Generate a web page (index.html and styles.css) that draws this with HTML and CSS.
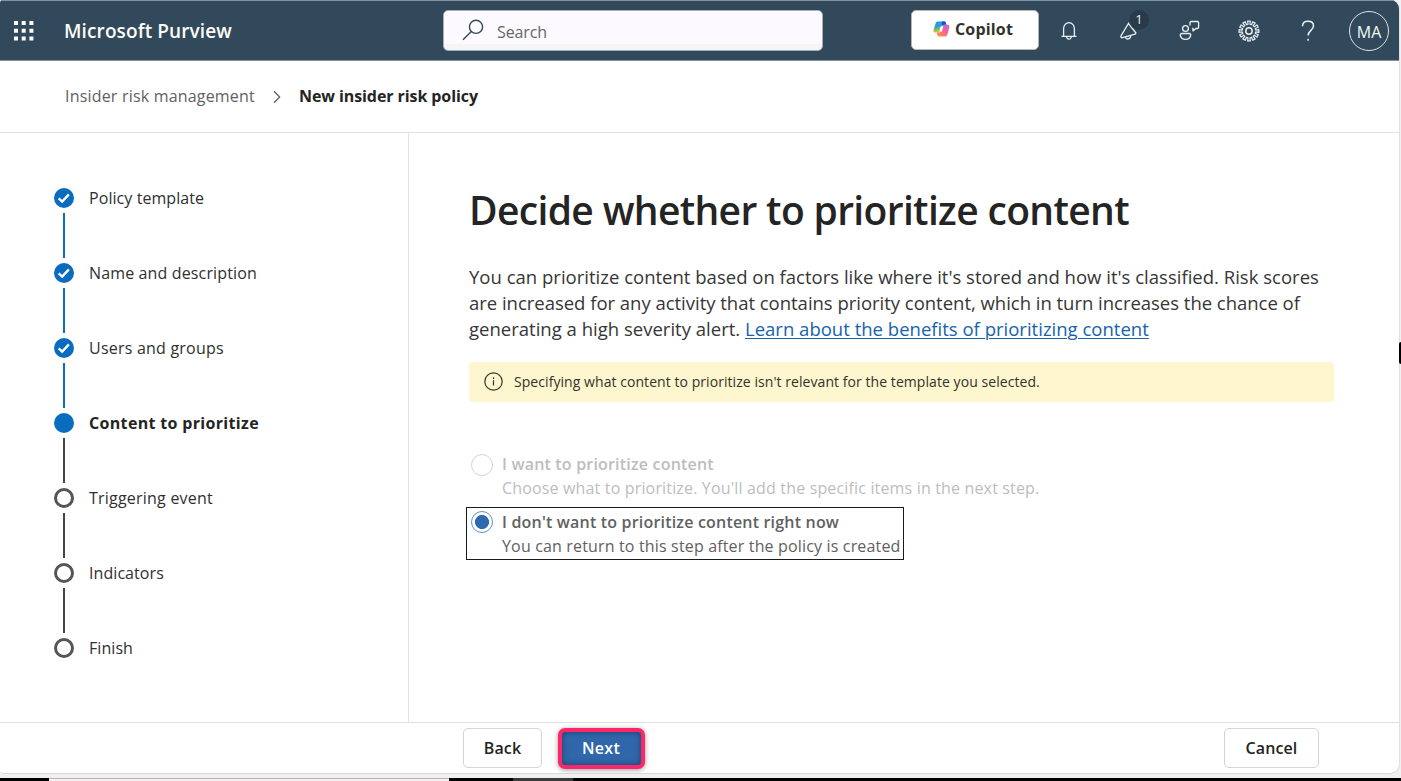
FILE: index.html
```html
<!DOCTYPE html>
<html lang="en">
<head>
<meta charset="utf-8">
<title>Microsoft Purview</title>
<link rel="stylesheet" href="styles.css">
</head>
<body>
<div class="window">
  <header class="topbar">
    <div class="brand">
      <svg class="waffle" width="20" height="20" viewBox="0 0 20 20" fill="#fdfdf5">
        <path d="M0 0h4v4H0zM7.700 0h4v4h-4zM15.400 0h4v4h-4zM0 7.700h4v4H0zM7.700 7.700h4v4h-4zM15.400 7.700h4v4h-4zM0 15.400h4v4H0zM7.700 15.400h4v4h-4zM15.400 15.400h4v4h-4z"/>
      </svg>
      <span class="brand-name">Microsoft Purview</span>
    </div>
    <div class="search">
      <svg width="22" height="22" viewBox="0 0 22 22" fill="none" stroke="#33495c" stroke-width="1.4"><circle cx="14" cy="7.8" r="6.6"/><path d="M9.3 12.5L1 20.8"/></svg>
      <span>Search</span>
    </div>
    <div class="actions">
      <button class="copilot">
        <svg width="17" height="16" viewBox="0 0 17 16">
          <defs>
            <linearGradient id="cpa" x1="0" y1="0" x2="0.3" y2="1"><stop offset="0" stop-color="#17a4e8"/><stop offset=".5" stop-color="#2d9bd8"/><stop offset=".72" stop-color="#7fc35b"/><stop offset="1" stop-color="#f3c21c"/></linearGradient>
            <linearGradient id="cpb" x1="1" y1="0" x2="0.3" y2="1"><stop offset="0" stop-color="#b56bea"/><stop offset=".5" stop-color="#f0609c"/><stop offset="1" stop-color="#ff8a4c"/></linearGradient>
          </defs>
          <path d="M5 .5h6.200c.9 0 1.300.5 1.600 1.300l.6 1.900h-2c-1 0-1.600.6-1.900 1.500L7.800 10c-.3 1-.8 1.600-1.900 1.600H2.400C.8 11.600.2 10.300.6 8.700L2.500 2.700C2.900 1.300 3.700.5 5 .5z" fill="url(#cpa)"/>
          <path d="M8.500.5h2.700c.9 0 1.300.5 1.600 1.300l.6 1.900h-2c-1 0-1.600.6-1.900 1.500z" fill="#1b50c8"/>
          <path d="M12 15.500H6.200c-1 0-1.500-.6-1.800-1.500l-.7-2.400h2.200c1.100 0 1.600-.6 1.900-1.600l1.700-4.800c.3-.9.9-1.500 1.900-1.500h3.200c1.600 0 2.100 1.300 1.700 2.900l-1.800 6.300c-.4 1.600-1 2.600-2.300 2.600z" fill="url(#cpb)"/>
          <path d="M7.700 5.200h2.700L9 10.600H6.300z" fill="#fff"/>
        </svg>
        <span>Copilot</span>
      </button>
      <svg class="bell" width="18" height="20" viewBox="0 0 18 20" fill="none" stroke="#e7eff0" stroke-width="1.300" stroke-linejoin="round"><path d="M3.600 15V7.500a5.400 5.900 0 0 1 10.800 0V15M1.500 15.300h15M6.700 15.600a2.300 2.500 0 0 0 4.600 0"/></svg>
      <div class="whatsnew">
        <svg width="20" height="22" viewBox="0 0 20 22" fill="none" stroke="#e7eff0" stroke-width="1.300" stroke-linejoin="round"><path d="M10 2.500L2 15.800c-.6 1 .3 2.200 1.500 1.900L17 13.800M9.500 3.500l7.800 10M6.500 17.200c.5 2.600 4.800 2.600 5.300-1.600"/></svg>
        <span class="badge">1</span>
      </div>
      <svg class="feedback" width="21" height="21" viewBox="0 0 21 21" fill="none" stroke="#e7eff0" stroke-width="1.350" stroke-linejoin="round"><circle cx="6.500" cy="8.500" r="2.900"/><path d="M2.800 13.500h7.400c1 0 1.600.7 1.500 1.600-.3 2.500-2.200 4.200-5.200 4.200s-4.900-1.700-5.200-4.200c-.1-.9.500-1.600 1.500-1.600zM11 5.500V2.800c0-.8.5-1.300 1.300-1.300h6c.8 0 1.300.5 1.300 1.300v4.400c0 .8-.5 1.300-1.300 1.300h-1.400l-2.900 2.400V8.500h-.8"/></svg>
      <svg class="gear" width="22" height="22" viewBox="0 0 22 22" fill="none" stroke="#e7eff0" stroke-width="1.200" stroke-linejoin="round"><circle cx="11" cy="11" r="3.200" stroke-width="1.500"/><path d="M10.060 4.270L9.610 1.100L12.390 1.100L11.940 4.270L13.540 4.700L14.740 1.730L17.150 3.120L15.180 5.640L16.360 6.820L18.880 4.850L20.270 7.260L17.300 8.460L17.730 10.060L20.900 9.610L20.900 12.390L17.730 11.940L17.300 13.540L20.270 14.740L18.880 17.150L16.360 15.180L15.180 16.360L17.150 18.880L14.740 20.270L13.540 17.300L11.940 17.730L12.390 20.900L9.610 20.900L10.060 17.730L8.460 17.300L7.260 20.270L4.850 18.880L6.820 16.360L5.640 15.180L3.120 17.150L1.730 14.740L4.700 13.540L4.270 11.940L1.100 12.390L1.100 9.610L4.270 10.060L4.700 8.460L1.730 7.260L3.120 4.850L5.640 6.820L6.820 5.640L4.850 3.120L7.260 1.730L8.460 4.700z"/></svg>
      <svg class="help" width="14" height="22" viewBox="0 0 14 22" fill="none" stroke="#e7eff0" stroke-width="1.500"><path d="M1.500 6.300C1.500 3 3.700 1.200 7 1.200s5.500 1.900 5.500 4.700c0 4.400-5.400 4.600-5.400 9.600"/><path d="M7.100 18.800v2"/></svg>
      <div class="avatar">MA</div>
    </div>
  </header>
  <nav class="crumbs">
    <span class="crumb">Insider risk management</span>
    <svg width="8" height="14" viewBox="0 0 8 14" fill="none" stroke="#616161" stroke-width="1.300"><path d="M1 1.200L6.700 7 1 12.800"/></svg>
    <span class="crumb-current">New insider risk policy</span>
  </nav>
  <div class="body">
    <aside class="steps">
      <div class="step done"><span class="dot"><svg width="20" height="20" viewBox="0 0 20 20" fill="none" stroke="#fff" stroke-width="2.300"><path d="M4.700 10.300l3.500 3.300 6.700-7.200"/></svg></span><span class="label t1">Policy template</span></div>
      <div class="step done"><span class="dot"><svg width="20" height="20" viewBox="0 0 20 20" fill="none" stroke="#fff" stroke-width="2.300"><path d="M4.700 10.300l3.500 3.300 6.700-7.200"/></svg></span><span class="label t2">Name and description</span></div>
      <div class="step done"><span class="dot"><svg width="20" height="20" viewBox="0 0 20 20" fill="none" stroke="#fff" stroke-width="2.300"><path d="M4.700 10.300l3.500 3.300 6.700-7.200"/></svg></span><span class="label t3">Users and groups</span></div>
      <div class="step current"><span class="dot"></span><span class="label">Content to prioritize</span></div>
      <div class="step todo"><span class="dot"></span><span class="label t3">Triggering event</span></div>
      <div class="step todo"><span class="dot"></span><span class="label t1">Indicators</span></div>
      <div class="step todo"><span class="dot"></span><span class="label t1">Finish</span></div>
    </aside>
    <main class="content">
      <h1>Decide whether to prioritize content</h1>
      <p class="intro">You can prioritize content based on factors like where it's stored and how it's classified. Risk scores<br><span class="tight">are increased for any activity that contains priority content, which in turn increases the chance of</span><br>generating a high severity alert. <a>Learn about the benefits of prioritizing content</a></p>
      <div class="notice">
        <svg width="19" height="19" viewBox="0 0 19 19" fill="none" stroke="#333329" stroke-width="1.200"><circle cx="9.500" cy="9.500" r="8.700"/><path d="M9.500 8.200v5.300M9.500 5.200v1.700"/></svg>
        <span>Specifying what content to prioritize isn't relevant for the template you selected.</span>
      </div>
      <div class="choice disabled">
        <span class="radio"></span>
        <div><div class="choice-title">I want to prioritize content</div><div class="choice-text">Choose what to prioritize. You'll add the specific items in the next step.</div></div>
      </div>
      <div class="choice selected">
        <span class="radio"></span>
        <div><div class="choice-title">I don't want to prioritize content right now</div><div class="choice-text">You can return to this step after the policy is created</div></div>
      </div>
    </main>
  </div>
  <footer class="footer">
    <button class="btn back">Back</button>
    <button class="btn next">Next</button>
    <button class="btn cancel">Cancel</button>
  </footer>
</div>
<div class="edge-mark"></div>
<div class="desktop"><i class="d1"></i><i class="d2"></i><i class="d3"></i><i class="d4"></i><i class="d5"></i></div>
</body>
</html>
```
FILE: styles.css
```css
* { box-sizing: border-box; }
body {
  margin: 0;
  width: 1401px;
  height: 781px;
  overflow: hidden;
  background: #f0f0f0;
  font-family: "Open Sans", "Noto Sans", sans-serif;
  font-size: 16px;
  color: #242424;
}
button { font-family: inherit; margin: 0; padding: 0; }
svg { display: block; flex: none; }

.window {
  display: flex;
  flex-direction: column;
  width: 1400px;
  height: 774px;
  background: #fff;
  border-right: 1px solid #e0e0e0;
  border-bottom: 1px solid #d8d8d8;
  border-radius: 3px 9px 10px 4px;
  overflow: hidden;
}

.topbar {
  display: flex;
  height: 61px;
  flex: none;
  background: #32495c;
  border-top: 1px solid #8593a0;
  border-bottom: 1px solid #8593a0;
}
.brand { display: flex; align-items: center; width: 443px; padding-left: 13.500px; gap: 30.500px; }
.brand-name { color: #fdfdf8; font-size: 19px; font-weight: 600; letter-spacing: .11px; padding-top: 1px; }
.search {
  display: flex;
  align-items: center;
  gap: 13px;
  width: 380px;
  height: 41px;
  margin-top: 9px;
  padding-left: 18px;
  background: linear-gradient(#fdfaff 33px, #f5f5f5 33px);
  border: 1px solid #a6afb8;
  border-radius: 5px;
  color: #666;
}
.search svg { margin-top: -1px; }
.search span { letter-spacing: -.1px; padding-top: 2px; }
.actions { display: flex; flex: 1; align-items: center; padding-left: 88px; }
.copilot {
  display: flex;
  align-items: center;
  gap: 5px;
  width: 128px;
  height: 40px;
  margin-top: -2px;
  padding: 0 0 1px 21px;
  background: #fff;
  border: 1px solid #b9b4ae;
  border-radius: 5px;
  color: #33302c;
  font-size: 16px;
  font-weight: 700;
  letter-spacing: .17px;
}
.bell { margin-left: 21px; }
.whatsnew { position: relative; margin-left: 41px; }
.badge {
  position: absolute;
  left: 10px;
  top: -10px;
  width: 20px;
  height: 20px;
  border-radius: 50%;
  background: #293a4b;
  color: #f2f2f2;
  font-size: 13px;
  line-height: 19px;
  text-align: center;
}
.feedback { margin-left: 40px; }
.gear { margin-left: 38px; }
.help { margin-left: 41px; }
.avatar {
  width: 40px;
  height: 40px;
  margin-left: 34px;
  border: 1.500px solid #dbe4e6;
  border-radius: 50%;
  color: #f4f8f4;
  font-size: 16px;
  line-height: 41px;
  text-align: center;
}

.crumbs {
  display: flex;
  align-items: center;
  flex: none;
  height: 72px;
  padding: 0 0 2px 65px;
  border-bottom: 1px solid #e3e3e3;
}
.crumbs svg { margin: 2px 18px 0 18px; }
.crumb { color: #616161; letter-spacing: .19px; }
.crumb-current { font-weight: 700; letter-spacing: -.08px; }

.body { display: flex; flex: 1; min-height: 0; }
.steps { width: 409px; flex: none; padding: 55px 0 0 54px; border-right: 1px solid #e3e3e3; }
.step { position: relative; display: flex; gap: 15px; height: 75px; }
.step:not(:last-child)::after {
  content: "";
  position: absolute;
  left: 8.700px;
  top: 25px;
  width: 2.600px;
  height: 45px;
  background: #444;
}
.step.done::after { background: #0f6cbd; }
.dot { width: 20px; height: 20px; border-radius: 50%; flex: none; background: #0a6cbf; }
.todo .dot { background: #fff; border: 3px solid #555; }
.label { line-height: 20px; color: #303030; }
.t1 { letter-spacing: .07px; }
.t2 { letter-spacing: .14px; }
.t3 { letter-spacing: .22px; }
.current .label { font-weight: 700; letter-spacing: .33px; color: #242424; }

.content { width: 991px; padding: 50px 0 0 60px; }
h1 { margin: 0; font-size: 39px; font-weight: 600; line-height: 54px; letter-spacing: -.65px; }
.intro { margin: 27px 0 0; font-size: 18.500px; line-height: 26px; letter-spacing: .01px; color: #363636; white-space: nowrap; }
.tight { letter-spacing: -.02px; }
.intro a { color: #1662ae; text-decoration: underline; text-decoration-thickness: 1px; text-underline-offset: 2px; }
.notice {
  display: flex;
  align-items: center;
  gap: 11px;
  width: 865px;
  height: 40px;
  margin-top: 20px;
  padding: 0 0 2px 15px;
  border-radius: 4px;
  background: #fef6cf;
  font-size: 14px;
  letter-spacing: .06px;
  color: #33332b;
}
.choice { display: flex; gap: 9px; white-space: nowrap; }
.choice.disabled { margin: 50px 0 0 2px; height: 55px; padding-top: 2px; color: #bdbdbd; }
.choice.selected {
  width: 438px;
  height: 53px;
  margin-left: -3px;
  padding: 4px 0 0 4px;
  border: 1px solid #1a1a1a;
  color: #616161;
}
.choice > div { margin-top: -1px; }
.choice .radio { margin-top: 0; }
.selected .radio { margin-top: -1px; }
.radio { width: 22px; height: 22px; flex: none; border: 1.500px solid #d3d3d3; border-radius: 50%; background: #fff; }
.selected .radio { border-color: #5f92ce; background: radial-gradient(circle, #2f69b0 6.700px, #fff 7.300px); }
.choice-title { font-weight: 600; line-height: 22px; letter-spacing: .19px; }
.choice-text { line-height: 26px; letter-spacing: .16px; }

.footer { display: flex; flex: none; height: 51px; padding: 5px 0 0 463px; border-top: 1px solid #e0e0e0; }
.btn {
  height: 40px;
  border: 1px solid #d4d4d4;
  border-radius: 5px;
  background: #fff;
  color: #242424;
  font-size: 16px;
  font-weight: 600;
  letter-spacing: .1px;
}
.back { width: 79px; }
.next {
  width: 87px;
  height: 41px;
  margin-left: 15.500px;
  padding-bottom: 2px;
  border: 4px solid #fb2768;
  border-radius: 7px;
  background: #3067aa;
  box-shadow: inset 0 0 6px #18406f, 0 1px 5px rgba(0, 0, 0, .4);
  color: #fff;
  letter-spacing: .28px;
}
.cancel { width: 95px; margin-left: 579.500px; }

.edge-mark { position: absolute; left: 1399px; top: 342px; width: 2px; height: 22px; background: #000; border-radius: 2px 0 0 2px; }
.desktop { display: flex; height: 3px; margin-top: 4px; }
.desktop i { height: 3px; background: #000; }
.desktop .d1 { width: 49px; }
.desktop .d2 { width: 400px; background: #f6f1f3; border-top: 1px solid #b5b5b5; }
.desktop .d3 { width: 64px; }
.desktop .d4 { width: 60px; background: #3a3a3a; }
.desktop .d5 { flex: 1; }
```
